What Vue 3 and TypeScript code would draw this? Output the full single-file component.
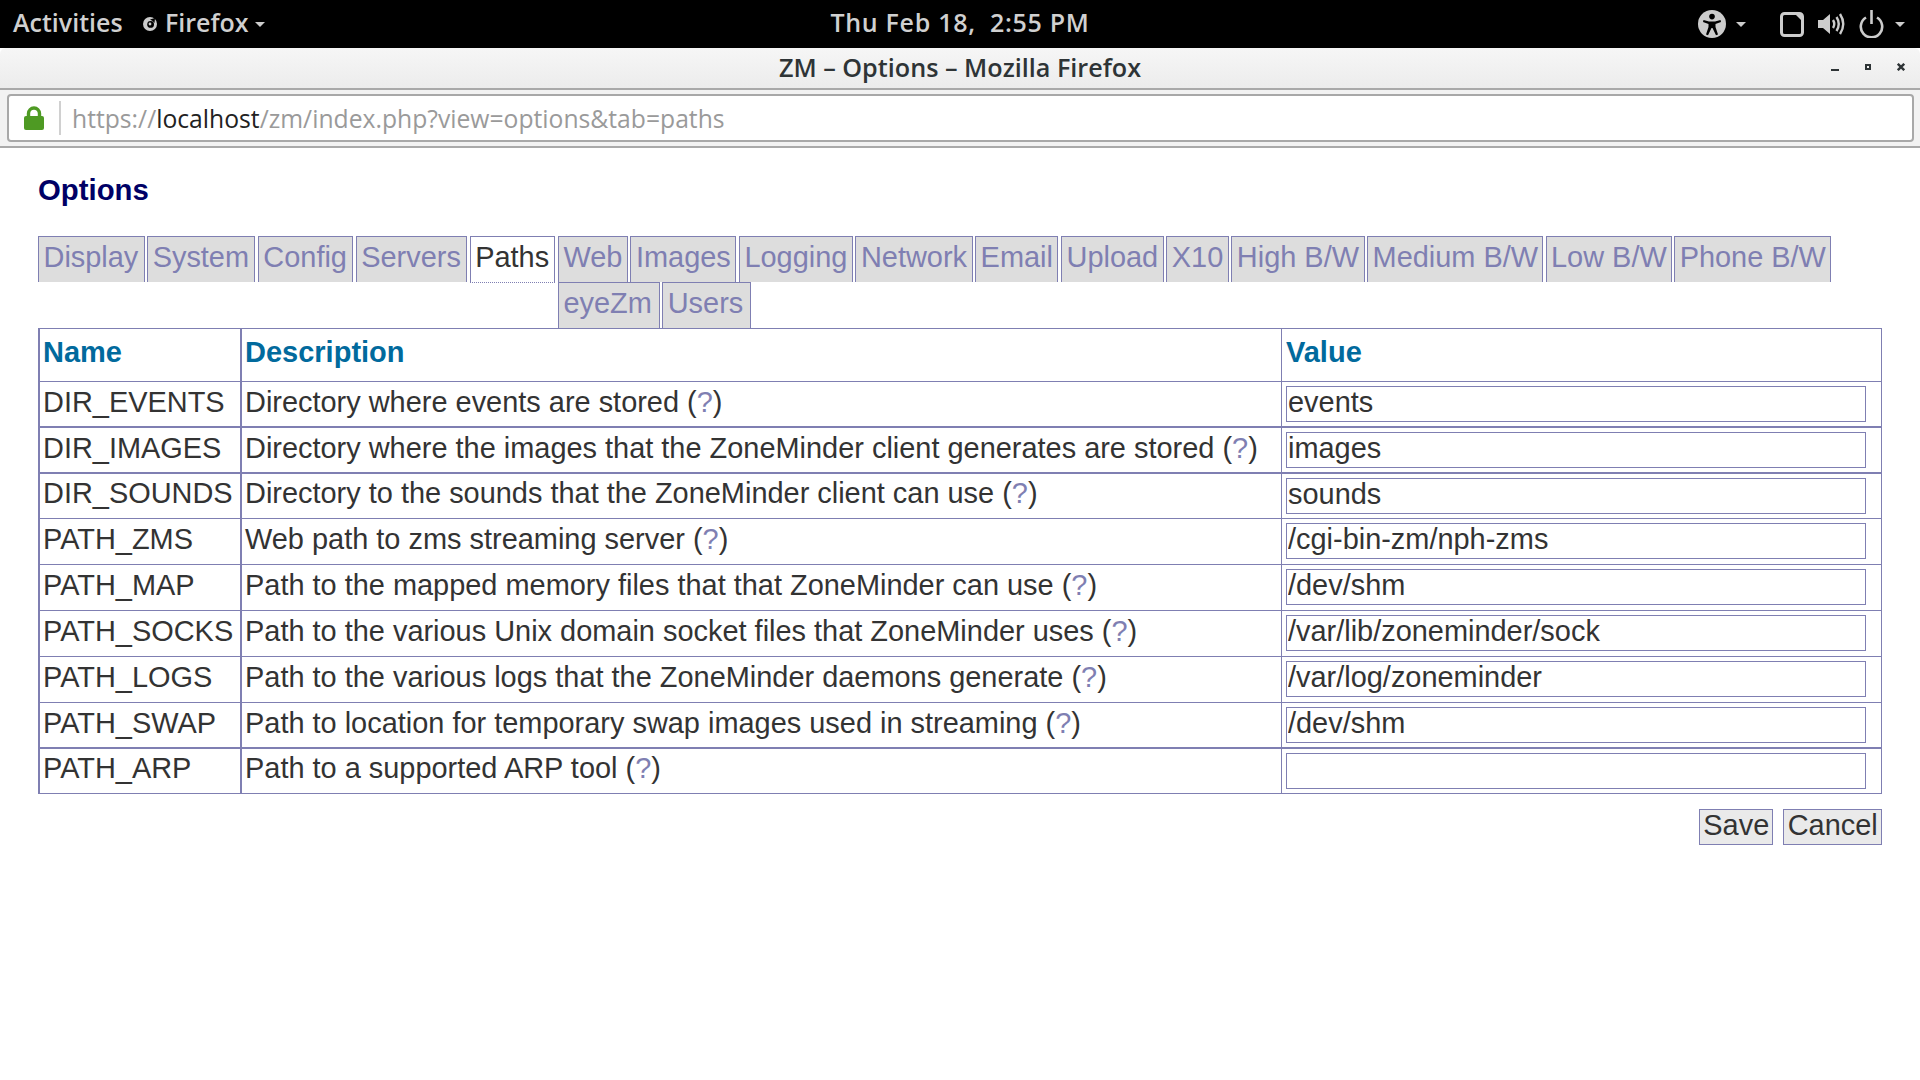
<script setup lang="ts">
interface Row { name: string; desc: string; value: string; cls: string }
const tabs: string[] = ['Display','System','Config','Servers','Paths','Web','Images','Logging','Network','Email','Upload','X10','High B/W','Medium B/W','Low B/W','Phone B/W','eyeZm','Users']
const rows: Row[] = [
  { name: 'DIR_EVENTS', desc: 'Directory where events are stored', value: 'events', cls: 'thick' },
  { name: 'DIR_IMAGES', desc: 'Directory where the images that the ZoneMinder client generates are stored', value: 'images', cls: 'thick' },
  { name: 'DIR_SOUNDS', desc: 'Directory to the sounds that the ZoneMinder client can use', value: 'sounds', cls: 'short' },
  { name: 'PATH_ZMS', desc: 'Web path to zms streaming server', value: '/cgi-bin-zm/nph-zms', cls: '' },
  { name: 'PATH_MAP', desc: 'Path to the mapped memory files that that ZoneMinder can use', value: '/dev/shm', cls: '' },
  { name: 'PATH_SOCKS', desc: 'Path to the various Unix domain socket files that ZoneMinder uses', value: '/var/lib/zoneminder/sock', cls: '' },
  { name: 'PATH_LOGS', desc: 'Path to the various logs that the ZoneMinder daemons generate', value: '/var/log/zoneminder', cls: '' },
  { name: 'PATH_SWAP', desc: 'Path to location for temporary swap images used in streaming', value: '/dev/shm', cls: 'thick' },
  { name: 'PATH_ARP', desc: 'Path to a supported ARP tool', value: '', cls: 'short' },
]
</script>

<template>
  <div class="screen">
    <header class="topbar">
      <div class="top-left">
        <span class="activities bar-text">Activities</span>
        <span class="app">
          <svg class="ff" width="14" height="14" viewBox="0 0 14 14"><circle cx="7" cy="7" r="7" fill="#ccc"/><circle cx="7.6" cy="7.4" r="3.4" fill="#000"/><path d="M7 2.5 L12 1 L11.5 6 Q10 3.5 7 2.5Z" fill="#000"/><circle cx="7" cy="7" r="1.4" fill="#ccc"/></svg>
          <span class="bar-text">Firefox</span>
          <svg class="caret" width="10" height="5" viewBox="0 0 10 5"><path d="M0 0H10L5 5Z" fill="#ccc"/></svg>
        </span>
      </div>
      <div class="clock bar-text">Thu Feb 18,&nbsp; 2:55 PM</div>
      <div class="top-right">
        <svg class="i-acc" width="28" height="28" viewBox="0 0 28 28"><circle cx="14" cy="14" r="14" fill="#ccc"/><circle cx="14" cy="6.6" r="2.8" fill="#000"/><path d="M5.5 10 L11 11.5 H17 L22.5 10 L23 12 L17.5 14 V17 L20 24.5 L18 25.2 L14.5 18 H13.5 L10 25.2 L8 24.5 L10.5 17 V14 L5 12Z" fill="#000"/></svg>
        <svg class="caret c1" width="10" height="5" viewBox="0 0 10 5"><path d="M0 0H10L5 5Z" fill="#ccc"/></svg>
        <svg class="i-win" width="24" height="25" viewBox="0 0 24 25"><rect x="1.5" y="1.5" width="21" height="22" rx="3" fill="none" stroke="#ccc" stroke-width="3"/><path d="M16 3H21V8Z" fill="#ccc"/></svg>
        <svg class="i-vol" width="27" height="24" viewBox="0 0 27 24"><path d="M0 8H5L12 2V22L5 16H0Z" fill="#ccc"/><g fill="none" stroke="#ccc" stroke-width="2.4"><path d="M15 8Q17.5 12 15 16"/><path d="M18.5 5Q23 12 18.5 19"/><path d="M22 2Q28.5 12 22 22"/></g></svg>
        <svg class="i-pow" width="25" height="28" viewBox="0 0 25 28"><g fill="none" stroke="#ccc" stroke-width="2.6"><path d="M7 7.5A10.7 10.7 0 1 0 18 7.5"/><path d="M12.5 0V14"/></g></svg>
        <svg class="caret c2" width="10" height="5" viewBox="0 0 10 5"><path d="M0 0H10L5 5Z" fill="#ccc"/></svg>
      </div>
    </header>

    <div class="titlebar">
      <span></span>
      <div class="title">ZM – Options – Mozilla Firefox</div>
      <div class="controls">
        <svg width="8" height="8" viewBox="0 0 8 8"><rect x="0" y="6" width="8" height="2" fill="#2e3436"/></svg>
        <svg width="6" height="6" viewBox="0 0 6 6"><rect x="1" y="1" width="4" height="4" fill="none" stroke="#2e3436" stroke-width="2"/></svg>
        <svg width="8" height="8" viewBox="0 0 8 8"><path d="M0.8 0.8L7.2 7.2M7.2 0.8L0.8 7.2" stroke="#2e3436" stroke-width="2.4"/></svg>
      </div>
    </div>

    <div class="toolbar">
      <div class="urlbar">
        <span class="lockbox">
          <svg width="20" height="24" viewBox="0 0 20 24"><rect x="0" y="10" width="20" height="14" rx="2" fill="#4e9a23"/><path d="M4.5 11V7.5a5.5 5.5 0 0 1 11 0V11" fill="none" stroke="#4e9a23" stroke-width="3.4"/></svg>
        </span>
        <span class="url">https://<b>localhost</b>/zm/index.php?view=options&amp;tab=paths</span>
      </div>
    </div>

    <main class="page">
      <h2 class="heading">Options</h2>
      <ul class="tabs">
        <li v-for="t in tabs" :key="t" :class="{ active: t === 'Paths' }"><a>{{ t }}</a></li>
      </ul>
      <table class="opts">
        <colgroup><col class="c-name"/><col class="c-desc"/><col class="c-val"/></colgroup>
        <thead>
          <tr><th>Name</th><th>Description</th><th>Value</th></tr>
        </thead>
        <tbody>
          <tr v-for="r in rows" :key="r.name" :class="r.cls">
            <td>{{ r.name }}</td>
            <td>{{ r.desc }} (<a class="help">?</a>)</td>
            <td class="val"><input type="text" :value="r.value" /></td>
          </tr>
        </tbody>
      </table>
      <div class="actions">
        <button type="button">Save</button>
        <button type="button">Cancel</button>
      </div>
    </main>
  </div>
</template>

<style scoped>
.screen { width: 1920px; height: 1080px; background: #fff; overflow: hidden; display: flex; flex-direction: column; }

.topbar { height: 48px; flex: none; background: #000; color: #d0d0d0; display: grid; grid-template-columns: 1fr auto 1fr; align-items: center; font: 600 25px "Open Sans", sans-serif; }
.bar-text { margin-top: -4px; }
.top-left { display: flex; align-items: center; padding-left: 13px; }
.activities { width: 130px; }
.app { display: flex; align-items: center; }
.ff { margin-right: 8px; }
.caret { margin-left: 6px; }
.clock { text-align: center; letter-spacing: 0.7px; }
.top-right { display: flex; align-items: center; justify-content: flex-end; padding-right: 15px; }
.c1 { margin-left: 10px; margin-right: 34px; }
.i-vol { margin-left: 14px; }
.i-pow { margin-left: 14px; }
.c2 { margin-left: 11px; }

.titlebar { height: 42px; flex: none; box-sizing: border-box; background: linear-gradient(#f6f6f6, #ececec); border-radius: 6px 6px 0 0; border-bottom: 2px solid #a9a9a9; display: grid; grid-template-columns: 1fr auto 1fr; align-items: center; }
.title { font: 600 25.2px "Open Sans", sans-serif; color: #2e3436; margin-top: -2px; }
.controls { display: flex; justify-content: flex-end; align-items: center; gap: 26px; padding-right: 15px; margin-top: -2px; }

.toolbar { height: 58px; flex: none; box-sizing: border-box; padding: 4px 6px 4px 7px; background: #f2f2f2; border-bottom: 2px solid #a9a9a9; }
.urlbar { height: 48px; box-sizing: border-box; background: #fff; border: 2px solid #a8a8a8; border-radius: 4px; display: flex; align-items: center; }
.lockbox { width: 52px; height: 34px; box-sizing: border-box; border-right: 2px solid #d0d0d0; display: flex; align-items: center; padding-left: 15px; }
.url { margin-left: 11px; font: 400 24.7px "Open Sans", sans-serif; color: #9a9a9a; }
.url b { font-weight: 400; color: #222; }

.page { padding: 0 38px; font: 28.93px "Liberation Sans", Arial, sans-serif; color: #333; }
.heading { margin: 25px 0 0; font: bold 29.33px/34px "Liberation Sans", Arial, sans-serif; color: #000066; height: 63px; }

.tabs { list-style: none; margin: 0; padding: 0; }
.tabs::after { content: ""; display: block; clear: both; }
.tabs li { float: left; box-sizing: border-box; height: 46px; margin-right: 2.6px; padding: 2px 4.5px 0; background: #ddd; border: 1px solid #7f7fb2; border-bottom: 0; line-height: 36px; color: #7f7fb2; }
.tabs li:nth-child(-n+5) { padding-right: 5.2px; }
.tabs li:nth-child(n+14):nth-child(-n+16) { padding-right: 3.8px; }
.tabs li:nth-child(n+17) { padding-right: 6.8px; }
.tabs li.active { height: 47px; background: #fff; color: #333; border-bottom: 1px dotted #7f7fb2; }

.opts { width: 1844px; table-layout: fixed; border-collapse: separate; border-spacing: 0; border-top: 1px solid #7f7fb2; border-left: 2px solid #7f7fb2; }
.c-name { width: 202px; }
.c-desc { width: 1040px; }
.c-val { width: 600px; }
.opts th, .opts td { box-sizing: border-box; padding: 0 0 0 3px; text-align: left; vertical-align: top; white-space: nowrap; border-right: 1px solid #7f7fb2; border-bottom: 1px solid #7f7fb2; line-height: 34px; }
.opts th:first-child, .opts td:first-child { border-right-width: 2px; }
.opts th { height: 53px; padding-top: 6px; color: #016a9d; font-weight: bold; font-size: 29px; }
.opts th:last-child { padding-left: 4px; }
.opts td { height: 46px; padding-top: 3px; }
.opts tr.short td { height: 45px; padding-top: 2px; }
.opts tr.thick td { border-bottom-width: 2px; }
.opts tr td.val { padding: 4px 0 0 4px; }
.opts input { display: block; box-sizing: border-box; width: 580px; height: 36px; margin: 0; padding: 0 1px 3px; border: 1px solid #7f7fb2; border-radius: 0; outline: 0; background: #fff; font: 28.93px "Liberation Sans", Arial, sans-serif; color: #333; }
.help { color: #7f7fb2; }

.actions { display: flex; justify-content: flex-end; gap: 10px; margin-top: 15px; }
.actions button { box-sizing: border-box; height: 36px; margin: 0; padding: 0 3.25px 0; line-height: 30px; display: flex; align-items: flex-start; border: 1px solid #7f7fb2; border-radius: 0; background: #eaeaea; font: 28.93px/30px "Liberation Sans", Arial, sans-serif; color: #333; }
</style>
